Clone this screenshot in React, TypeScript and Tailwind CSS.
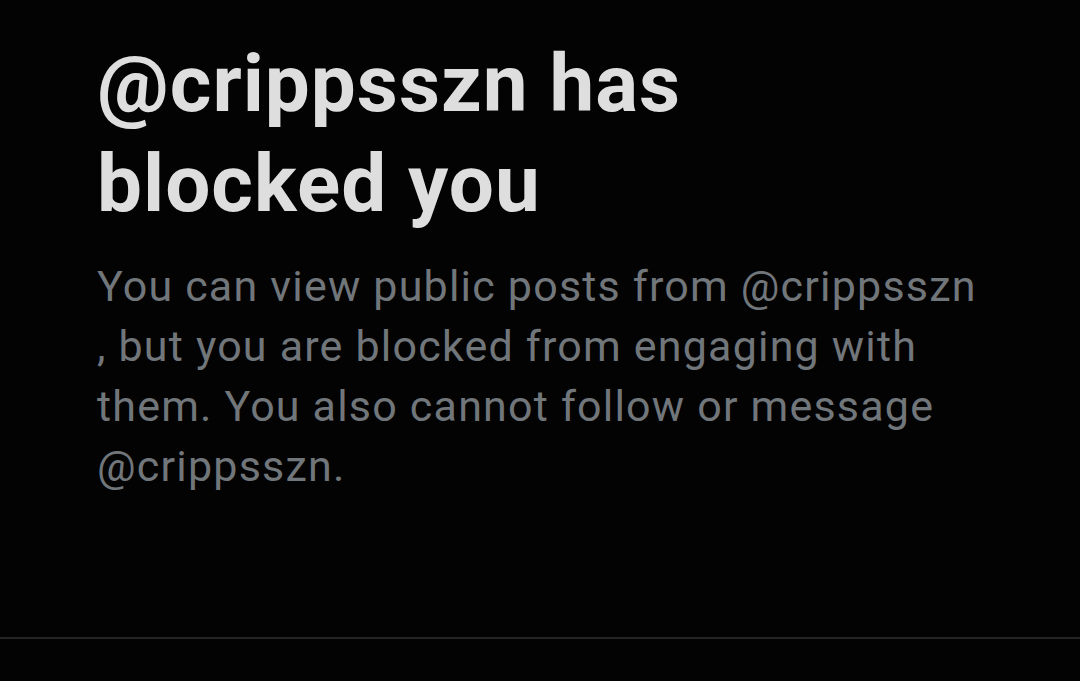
import * as React from "react";

const HANDLE = "@crippsszn";

const BlockedNotice: React.FC = () => {
  return (
    <div className="pl-[97px] pr-10 pt-[34px]">
      <h1 className="text-[80px] leading-[100px] font-bold text-[#dedede] tracking-[1px]">
        {HANDLE} has
        <br />
        blocked you
      </h1>
      <p className="mt-[22px] text-[43px] leading-[60px] text-[#71767b] tracking-[1.2px]">
        You can view public posts from {HANDLE}
        <br />
        , but you are blocked from engaging with
        <br />
        them. You also cannot follow or message
        <br />
        {HANDLE}.
      </p>
    </div>
  );
};

export default function App() {
  return (
    <div
      className="w-[1080px] h-[681px] bg-[#030303] flex flex-col overflow-hidden"
      style={{ fontFamily: '"Roboto", "Liberation Sans", sans-serif' }}
    >
      <div className="h-[637px]">
        <BlockedNotice />
      </div>
      <div className="h-[2px] bg-[#222324]" />
      <div className="flex-1" />
    </div>
  );
}
